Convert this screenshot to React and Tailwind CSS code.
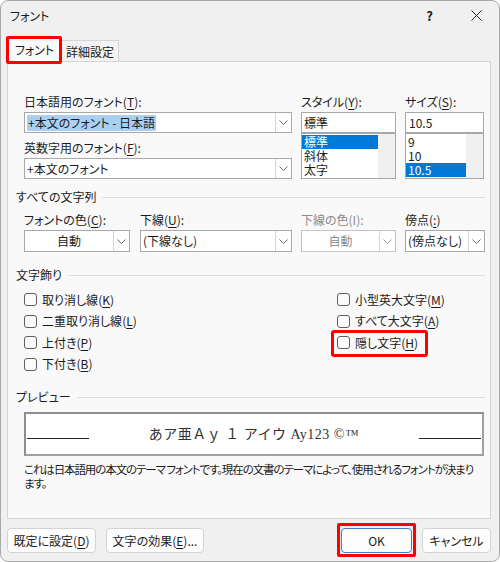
import React from "react";

function Chevron({ color = "#6b6b6b" }) {
  return (
    <svg width="9" height="5" viewBox="0 0 9 5" fill="none">
      <path d="M0.5 0.5 L4.5 4.5 L8.5 0.5" stroke={color} strokeWidth="1" />
    </svg>
  );
}

function Acc({ text, k, tail = "" }) {
  return (
    <span>
      {text}(<u className="underline-offset-2">{k}</u>){tail}
    </span>
  );
}

function Combo({ width, h = "h-[21px]", children, disabled, center, selected }) {
  return (
    <div
      className={`flex ${h} border ${disabled ? "border-[#c4c4c4] text-[#8a8a8a]" : "border-[#a8a8a8]"} bg-white`}
      style={{ width }}
    >
      <div className={`flex-1 flex items-center px-[2px] ${center ? "justify-center" : ""}`}>
        {selected ? <span className="bg-[#a9d0f3] px-[1px] leading-[16px]">{children}</span> : <span>{children}</span>}
      </div>
      <div className="w-[16px] border-l border-[#d4d4d4] flex items-center justify-center">
        <Chevron color={disabled ? "#a0a0a0" : "#6b6b6b"} />
      </div>
    </div>
  );
}

function ListBox({ items, sel }) {
  return (
    <div className="flex h-[46px] border border-[#a8a8a8] bg-white overflow-hidden">
      <div className="flex-1 flex flex-col pt-px">
        {items.map((it) => (
          <div
            key={it}
            className={`h-[14px] leading-[14px] pl-[2px] ${it === sel ? "bg-[#0078d7] text-white" : ""}`}
          >
            {it}
          </div>
        ))}
      </div>
      <div className="w-[17px] bg-[#f0f0f0]" />
    </div>
  );
}

function Section({ title }) {
  return (
    <div className="flex items-center gap-[6px] h-[16px] pl-[8px]">
      <span>{title}</span>
      <div className="flex-1 h-px bg-[#dedede]" />
    </div>
  );
}

function Check({ children }) {
  return (
    <div className="h-[21.5px] flex items-center gap-[5px]">
      <div className="w-[13px] h-[13px] border border-[#5f5f5f] rounded-[3px] bg-[#fbfbfb]" />
      <span>{children}</span>
    </div>
  );
}

function Btn({ w, children, primary }) {
  return (
    <div
      className={`h-[25px] flex items-center justify-center rounded-[4px] bg-[#fdfdfd] border ${primary ? "border-[#3d7fcb]" : "border-[#d3d3d3]"}`}
      style={{ width: w }}
    >
      {children}
    </div>
  );
}

export default function App() {
  return (
    <div className="w-[500px] h-[562px] bg-[#f0f0f0] border border-[#a9a9a9] rounded-[8px] overflow-hidden text-[12px] leading-[16px] text-[#1b1b1b] font-['Noto_Sans_CJK_JP','Noto_Sans',sans-serif] [font-feature-settings:'palt']">
      {/* title bar */}
      <div className="h-[29px] flex items-center pl-[9px] pr-[17px]">
        <span className="flex-1">フォント</span>
        <span className="mr-[38px] text-[13px] font-semibold">?</span>
        <svg width="11" height="11" viewBox="0 0 11 11">
          <path d="M0.5 0.5 L10.5 10.5 M10.5 0.5 L0.5 10.5" stroke="#222" strokeWidth="1" />
        </svg>
      </div>

      {/* tabs */}
      <div className="h-[31px] flex items-end pl-[6px]">
        <div className="relative w-[55px] h-[25px] mb-[-1px] z-10 flex items-center justify-center bg-[#f9f9f9] border border-b-0 border-[#d5d5d5]">
          フォント
          <div className="absolute -left-[2px] -right-[1px] -top-[2px] -bottom-[2px] border-[3px] border-[#ff0000] rounded-[2px]" />
        </div>
        <div className="w-[57px] h-[21px] flex items-center justify-center bg-[#f3f3f3] border border-b-0 border-l-0 border-[#d5d5d5] pt-px">
          詳細設定
        </div>
      </div>

      {/* panel */}
      <div className="ml-[6px] w-[484px] h-[458px] border border-[#d5d5d5] bg-[#f9f9f9] pt-[32px] pr-[5px]">
        {/* font row */}
        <div className="flex gap-[9px] pl-[16px]">
          <div className="w-[268px]">
            <div><Acc text="日本語用のフォント" k="T" tail=":" /></div>
            <div className="mt-[2px]">
              <Combo width={268} selected>+本文のフォント - 日本語</Combo>
            </div>
            <div className="mt-[7px]"><Acc text="英数字用のフォント" k="F" tail=":" /></div>
            <div className="mt-[2px]">
              <Combo width={268}>+本文のフォント</Combo>
            </div>
          </div>
          <div className="w-[95px]">
            <div><Acc text="スタイル" k="Y" tail=":" /></div>
            <div className="mt-[2px] h-[21px] border border-[#a8a8a8] bg-white flex items-center pl-[2px]">標準</div>
            <ListBox items={["標準", "斜体", "太字"]} sel="標準" />
          </div>
          <div className="w-[79px]">
            <div><Acc text="サイズ" k="S" tail=":" /></div>
            <div className="mt-[2px] h-[21px] border border-[#a8a8a8] bg-white flex items-center pl-[3px]">10.5</div>
            <ListBox items={["9", "10", "10.5"]} sel="10.5" />
          </div>
        </div>

        {/* all text */}
        <div className="mt-[10px]">
          <Section title="すべての文字列" />
        </div>
        <div className="mt-[7px] flex pl-[16px]">
          <div className="w-[106px]">
            <div><Acc text="フォントの色" k="C" tail=":" /></div>
            <div className="mt-[2px]"><Combo width={106} h="h-[22px]" center>自動</Combo></div>
          </div>
          <div className="w-[152px] ml-[10px]">
            <div><Acc text="下線" k="U" tail=":" /></div>
            <div className="mt-[2px]"><Combo width={152} h="h-[22px]">(下線なし)</Combo></div>
          </div>
          <div className="w-[95px] ml-[9px]">
            <div className="text-[#8a8a8a]">下線の色(I):</div>
            <div className="mt-[2px]"><Combo width={95} h="h-[22px]" disabled center>自動</Combo></div>
          </div>
          <div className="w-[80px] ml-[9px]">
            <div><Acc text="傍点" k=":" /></div>
            <div className="mt-[2px]"><Combo width={80} h="h-[22px]">(傍点なし)</Combo></div>
          </div>
        </div>

        {/* decorations */}
        <div className="mt-[15px]">
          <Section title="文字飾り" />
        </div>
        <div className="mt-[6px] flex pl-[16px]">
          <div className="w-[313px] flex flex-col">
            <Check><Acc text="取り消し線" k="K" /></Check>
            <Check><Acc text="二重取り消し線" k="L" /></Check>
            <Check><Acc text="上付き" k="P" /></Check>
            <Check><Acc text="下付き" k="B" /></Check>
          </div>
          <div className="flex flex-col items-start">
            <Check><Acc text="小型英大文字" k="M" /></Check>
            <Check><Acc text="すべて大文字" k="A" /></Check>
            <div className="relative">
              <Check><Acc text="隠し文字" k="H" /></Check>
              <div className="absolute -left-[6px] -right-[10px] -top-[2px] -bottom-[3px] border-[3px] border-[#ff0000] rounded-[3px]" />
            </div>
          </div>
        </div>

        {/* preview */}
        <div className="mt-[14px]">
          <Section title="プレビュー" />
        </div>
        <div className="mt-[7px] ml-[16px] w-[460px] h-[44px] bg-white border-2 border-[#8e8e8e] border-r-[#a0a0a0] border-b-[#a0a0a0] flex items-end pb-[15px] px-[1px]">
          <div className="w-[62px] h-px bg-[#222]" />
          <div className="flex-1 text-center text-[14px] leading-[16px] mb-[-4px] tracking-[0.5px] text-[#333] font-['Liberation_Serif','Noto_Sans_CJK_JP',serif] [font-feature-settings:normal]">
            あア亜Ａｙ １ アイウ Ay123 ©™
          </div>
          <div className="w-[62px] h-px bg-[#222]" />
        </div>
        <div className="mt-[6px] ml-[16px] leading-[14px] whitespace-nowrap text-[11.5px] tracking-[-1.1px]">
          これは日本語用の本文のテーマ フォントです。現在の文書のテーマによって、使用されるフォントが決まり
          <br />
          ます。
        </div>
      </div>

      {/* buttons */}
      <div className="mt-[9px] flex pl-[6px] pr-[8px]">
        <Btn w={89}><Acc text="既定に設定" k="D" /></Btn>
        <div className="ml-[10px]">
          <Btn w={98}><Acc text="文字の効果" k="E" tail="..." /></Btn>
        </div>
        <div className="flex-1" />
        <div className="relative">
          <Btn w={71} primary>OK</Btn>
          <div className="absolute -left-[4px] -right-[4px] -top-[5px] -bottom-[4px] border-[3px] border-[#ff0000] rounded-[2px]" />
        </div>
        <div className="ml-[10px]">
          <Btn w={69}>キャンセル</Btn>
        </div>
      </div>
    </div>
  );
}
